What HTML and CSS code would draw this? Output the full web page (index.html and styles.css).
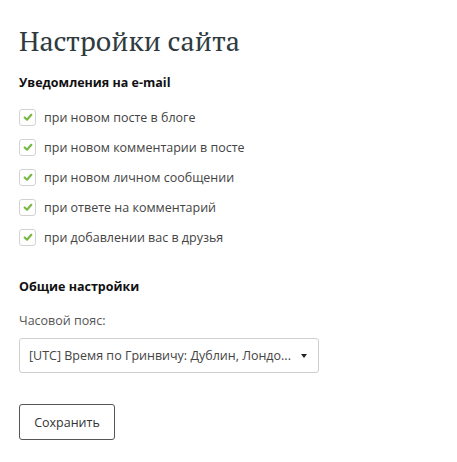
FILE: index.html
```html
<!DOCTYPE html>
<html lang="ru">
<head>
<meta charset="utf-8">
<link rel="stylesheet" href="styles.css">
</head>
<body>
<div class="page">
  <h1 class="title">Настройки сайта</h1>
  <h2 class="section-title">Уведомления на e-mail</h2>
  <ul class="checks">
    <li class="check-row"><span class="box"><svg viewBox="0 0 12 12" width="10" height="10"><path d="M2 6.5 L4.8 9.2 L10 3.4" fill="none" stroke="#78b845" stroke-width="2.6" stroke-linecap="round" stroke-linejoin="round"/></svg></span>при новом посте в блоге</li>
    <li class="check-row"><span class="box"><svg viewBox="0 0 12 12" width="10" height="10"><path d="M2 6.5 L4.8 9.2 L10 3.4" fill="none" stroke="#78b845" stroke-width="2.6" stroke-linecap="round" stroke-linejoin="round"/></svg></span>при новом комментарии в посте</li>
    <li class="check-row"><span class="box"><svg viewBox="0 0 12 12" width="10" height="10"><path d="M2 6.5 L4.8 9.2 L10 3.4" fill="none" stroke="#78b845" stroke-width="2.6" stroke-linecap="round" stroke-linejoin="round"/></svg></span>при новом личном сообщении</li>
    <li class="check-row"><span class="box"><svg viewBox="0 0 12 12" width="10" height="10"><path d="M2 6.5 L4.8 9.2 L10 3.4" fill="none" stroke="#78b845" stroke-width="2.6" stroke-linecap="round" stroke-linejoin="round"/></svg></span>при ответе на комментарий</li>
    <li class="check-row"><span class="box"><svg viewBox="0 0 12 12" width="10" height="10"><path d="M2 6.5 L4.8 9.2 L10 3.4" fill="none" stroke="#78b845" stroke-width="2.6" stroke-linecap="round" stroke-linejoin="round"/></svg></span>при добавлении вас в друзья</li>
  </ul>
  <h2 class="section-title general">Общие настройки</h2>
  <div class="label">Часовой пояс:</div>
  <div class="select"><span class="select-text">[UTC] Время по Гринвичу: Дублин, Лондо...</span><span class="caret"></span></div>
  <button class="btn">Сохранить</button>
</div>
</body>
</html>
```
FILE: styles.css
```css
* { box-sizing: border-box; }
html, body { margin: 0; padding: 0; background: #fff; }
body { font-family: "Open Sans", "Noto Sans", sans-serif; color: #333; font-size: 12.5px; }
.page { padding: 24px 19px; display: flex; flex-direction: column; align-items: flex-start; }
.title {
  font-family: "PT Serif", "DejaVu Serif", "Liberation Serif", serif;
  font-weight: normal;
  font-size: 28px;
  line-height: 34px;
  color: #2f3b3e;
  margin: 0 0 16px 0;
}
.section-title {
  font-size: 12.5px;
  font-weight: 700;
  color: #111;
  margin: 0;
  line-height: 18px;
}
.checks { list-style: none; margin: 16px 0 0 0; padding: 0; display: flex; flex-direction: column; gap: 12px; }
.check-row { display: flex; align-items: center; height: 18px; color: #444; }
.box {
  width: 17px; height: 17px;
  border: 1px solid #d2d2d2;
  border-radius: 3px;
  display: inline-flex; align-items: center; justify-content: center;
  margin-right: 8px;
  background: #fff;
}
.general { margin-top: 32px; }
.label { margin-top: 16px; color: #555; line-height: 18px; }
.select {
  margin-top: 8px;
  width: 300px; height: 35px;
  border: 1px solid #cfcfcf;
  border-radius: 3px;
  display: flex; align-items: center; justify-content: space-between;
  padding: 0 11px 0 9px;
  color: #444;
}
.select-text { white-space: nowrap; }
.caret { width: 0; height: 0; border-left: 3.5px solid transparent; border-right: 3.5px solid transparent; border-top: 4px solid #222; }
.btn {
  margin-top: 31px;
  font-family: inherit;
  font-size: 12.5px;
  color: #333;
  background: #fff;
  border: 1px solid #555;
  border-radius: 3px;
  width: 96px; height: 36px;
  padding: 0;
}
```
